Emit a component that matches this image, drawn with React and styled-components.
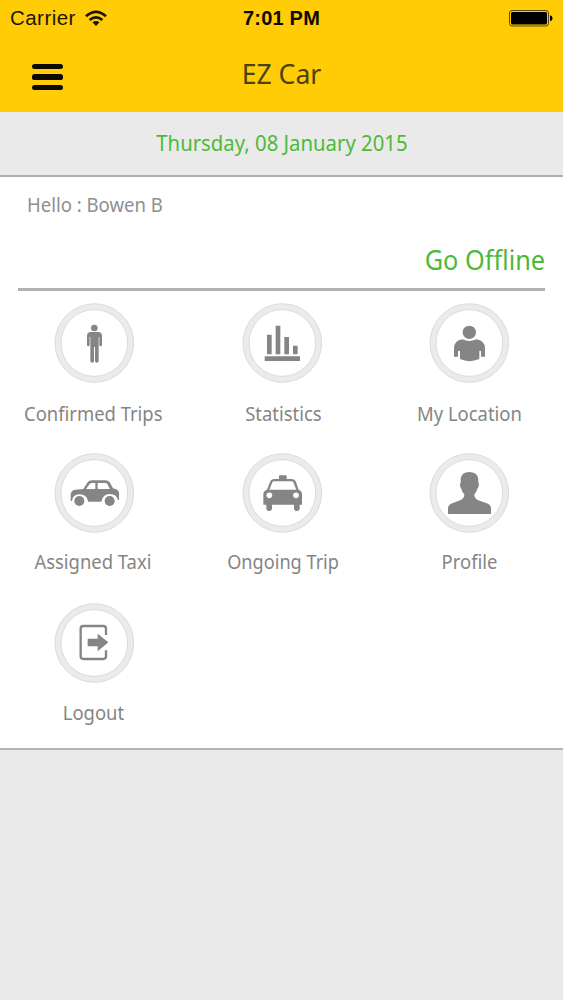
import React from 'react'
import styled, { createGlobalStyle } from 'styled-components'

const GlobalStyle = createGlobalStyle`
  * {
    box-sizing: border-box;
  }
  body {
    margin: 0;
    background-color: #eaeaea;
    font-family: 'Noto Sans', 'Open Sans', sans-serif;
  }
`

const Screen = styled.div`
  width: 563px;
  height: 1000px;
  overflow: hidden;
  background-color: #eaeaea;
`

const Header = styled.header`
  height: 112px;
  background-color: #ffcc06;
`

const StatusBar = styled.div`
  display: grid;
  grid-template-columns: 1fr auto 1fr;
  align-items: center;
  height: 36px;
  padding: 0 10px 0 10px;
  font-family: 'Liberation Sans', Arial, sans-serif;
  font-size: 20px;
  color: #1c1600;
`

const Carrier = styled.div`
  display: flex;
  align-items: center;
  gap: 9px;
  font-size: 20.5px;
  letter-spacing: 0.45px;
`

const Clock = styled.div`
  font-weight: bold;
  color: #0c0900;
  letter-spacing: 0.2px;
`

const Battery = styled.svg`
  justify-self: end;
`

const TitleBar = styled.div`
  display: grid;
  grid-template-columns: 94px 1fr 94px;
  align-items: center;
  height: 76px;
`

const MenuButton = styled.button`
  display: flex;
  flex-direction: column;
  gap: 5.3px;
  width: 31px;
  margin: 6px 0 0 32px;
  padding: 0;
  border: 0;
  background: none;
`

const MenuLine = styled.span`
  height: 5.2px;
  border-radius: 2.6px;
  background-color: #0b0900;
`

const Title = styled.h1`
  margin: 0 0 3px;
  font-size: 28px;
  font-weight: 400;
  text-align: center;
  transform: scaleX(0.95);
  color: #4a4212;
`

const DateBar = styled.div`
  height: 65px;
  padding-top: 1px;
  border-bottom: 2px solid #adadad;
  line-height: 60px;
  font-size: 21.5px;
  text-align: center;
  color: #4dba36;
`

const Narrow = styled.span`
  display: inline-block;
  transform: scaleX(${({ $scale }) => $scale || 0.945});
  transform-origin: ${({ $origin }) => $origin || 'center'};
`

const Panel = styled.main`
  height: 573px;
  padding: 0 18px;
  border-bottom: 2px solid #b4b4b4;
  background-color: #fff;
`

const Greeting = styled.div`
  height: 54px;
  padding-left: 9px;
  line-height: 55px;
  font-size: 19.5px;
  color: #8f8f8f;
`

const StatusLink = styled.div`
  height: 60px;
  border-bottom: 3px solid #b1b1b1;
  line-height: 59px;
  font-size: 26.5px;
  text-align: right;
  color: #4dba36;
`

const Menu = styled.div`
  display: grid;
  grid-template-columns: 188px 188px 186px;
  grid-template-rows: 150px 150px 150px;
  margin: 12px -18px 0;
`

const MenuItem = styled.div`
  display: flex;
  flex-direction: column;
  align-items: center;
`

const Icon = styled.svg`
  flex: none;
  fill: #858585;
`

const Label = styled.div`
  margin-top: ${({ $gap }) => $gap}px;
  margin-left: ${({ $shift }) => $shift || 0}px;
  line-height: 26px;
  font-size: 19.5px;
  white-space: nowrap;
  color: #858585;
`

const Person = () => (
  <>
    <circle cx="163" cy="99" r="10" />
    <path d="M152 111 h22 q12 0 12 12 v27 q0 4 -4 4 t-4 -4 v-24 h-2 v72 q0 5 -5.500 5 t-5.500 -5 v-42 h-3 v42 q0 5 -5.500 5 t-5.500 -5 v-72 h-2 v24 q0 4 -4 4 t-4 -4 v-27 q0 -12 11 -12z" />
  </>
)

const Chart = () => (
  <path d="M117 119h14v59h-14z M143 92h14v86h-14z M169 126h14v52h-14z M195 152h14v26h-14z M110 184h106v14h-106z" />
)

const Location = () => (
  <g transform="translate(-3 0)">
    <circle cx="166" cy="112" r="20" />
    <path d="M145 133 Q166 143 187 133 Q213 137 213 160 V185 H201 V168 H196 V192 Q166 205 138 192 V168 H132 V185 H120 V160 Q120 137 145 133z" />
  </g>
)

const Car = () => (
  <>
    <path
      fillRule="evenodd"
      d="M92 168 V153 Q91 136 105 134 L130 132 L143 112 Q147 106 156 106 H196 Q204 106 209 112 L219 130 Q237 134 237 144 V165 H234 Q230 147 209 147 Q188 147 184 170 H145 Q140 148 118 148 Q98 148 96 168z M138 132 H166 V114 H156 Q151 114 149 117z M173 114 V132 H210 L202 117 Q200 114 196 114z"
    />
    <circle cx="118" cy="168" r="15" />
    <circle cx="209" cy="168" r="15" />
  </>
)

const Taxi = () => (
  <>
    <path
      fillRule="evenodd"
      d="M153 102 V93 Q153 91 155 91 H174 Q176 91 176 93 V102 H190 Q200 102 203 109 L212 134 Q222 137 222 148 V179 H215 V190 Q215 198 206.500 198 T198 190 V179 H132 V190 Q132 198 123.500 198 T115 190 V179 H106 V148 Q106 137 117 134 L127 109 Q130 102 139 102z M124 134 H205 L196 112 Q195 109 190 109 H139 Q134 109 133 112z"
    />
    <circle cx="124" cy="151" r="8.500" fill="#fff" />
    <circle cx="204" cy="151" r="8.500" fill="#fff" />
  </>
)

const Profile = () => (
  <g transform="translate(-3 0)">
    <path d="M166 81 Q190 81 193 102 V114 Q196 116 194 124 Q192 130 190 131 Q187 143 181 148 Q181 160 191 165 L218 175 Q230 179 231 190 V207 H102 V190 Q103 179 115 175 L140 165 Q151 160 151 148 Q144 142 142 131 Q138 129 138 119 Q138 115 140 114 V102 Q142 81 166 81z" />
  </g>
)

const Logout = () => (
  <>
    <path
      d="M198 120 V101 Q198 93 190 93 H130 Q122 93 122 101 V184 Q122 192 130 192 H190 Q198 192 198 184 V166"
      fill="none"
      stroke="#858585"
      strokeWidth="7"
    />
    <path d="M145 131 H173 V116 L205 142 L173 169 V154 H145 Q143 154 143 152 V133 Q143 131 145 131z" />
  </>
)

const items = [
  { label: 'Confirmed Trips', icon: Person, gap: 18, shift: -2 },
  { label: 'Statistics', icon: Chart, gap: 18, shift: 2 },
  { label: 'My Location', icon: Location, gap: 18, shift: 1 },
  { label: 'Assigned Taxi', icon: Car, gap: 16, shift: -2 },
  { label: 'Ongoing Trip', icon: Taxi, gap: 16, shift: 2, scale: 0.93 },
  { label: 'Profile', icon: Profile, gap: 16, shift: 1 },
  { label: 'Logout', icon: Logout, gap: 17, shift: -2 },
]

const App = () => {
  return (
    <Screen>
      <GlobalStyle />
      <Header>
        <StatusBar>
          <Carrier>
            Carrier
            <svg width="22" height="17" viewBox="0 0 22 17">
              <g fill="none" stroke="#1c1600" strokeWidth="2.6">
                <path d="M1 6.200 Q11 -2.600 21 6.200" />
                <path d="M4.600 10.100 Q11 4.600 17.400 10.100" />
              </g>
              <path d="M7.500 12.300 Q11 9.500 14.500 12.300 L11 16z" fill="#1c1600" />
            </svg>
          </Carrier>
          <Clock>7:01 PM</Clock>
          <Battery width="44" height="17" viewBox="0 0 44 17">
            <rect x="0.500" y="0.500" width="39" height="15.500" rx="2.500" fill="none" stroke="#5c4a04" />
            <rect x="2" y="2" width="36" height="12.500" rx="1.500" />
            <path d="M41 5.300 Q43.500 6 43.500 8.300 T41 11.300z" />
          </Battery>
        </StatusBar>
        <TitleBar>
          <MenuButton aria-label="Menu">
            <MenuLine />
            <MenuLine />
            <MenuLine />
          </MenuButton>
          <Title>EZ Car</Title>
        </TitleBar>
      </Header>
      <DateBar>
        <Narrow>Thursday, 08 January 2015</Narrow>
      </DateBar>
      <Panel>
        <Greeting>
          <Narrow $origin="left" $scale={0.95}>Hello : Bowen B</Narrow>
        </Greeting>
        <StatusLink>
          <Narrow $origin="right" $scale={0.955}>Go Offline</Narrow>
        </StatusLink>
        <Menu>
          {items.map(({ label, icon: Glyph, gap, shift, scale }) => (
            <MenuItem key={label}>
              <Icon width="80" height="80" viewBox="42 24 240 240">
                <circle cx="163" cy="144" r="109" fill="#fff" stroke="#ebebeb" strokeWidth="18" />
                <circle cx="163" cy="144" r="118" fill="none" stroke="#d6d6d6" strokeWidth="2.5" />
                <circle cx="163" cy="144" r="100" fill="none" stroke="#d6d6d6" strokeWidth="2.5" />
                <Glyph />
              </Icon>
              <Label $gap={gap} $shift={shift}>
                <Narrow $scale={scale}>{label}</Narrow>
              </Label>
            </MenuItem>
          ))}
        </Menu>
      </Panel>
    </Screen>
  )
}

export default App
